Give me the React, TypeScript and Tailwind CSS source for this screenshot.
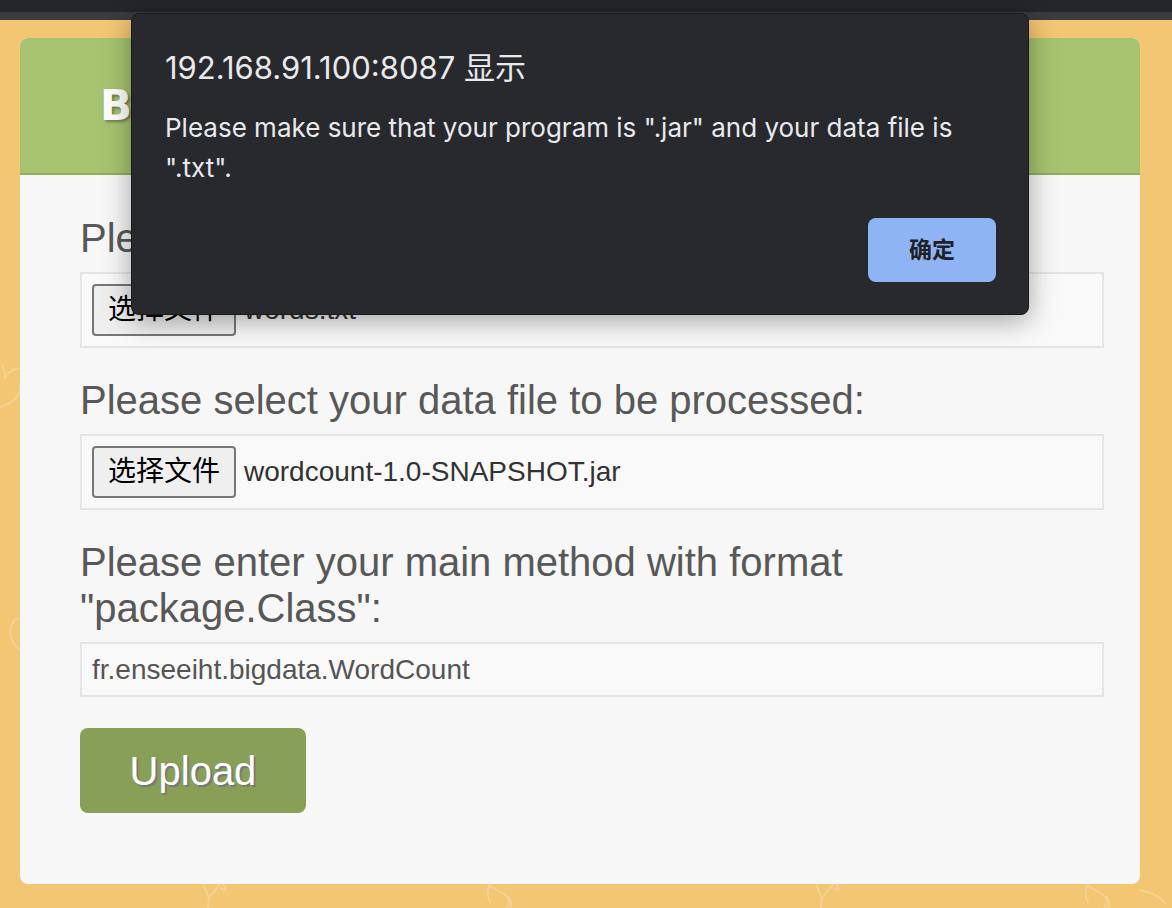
import React from "react"

const pageFont = { fontFamily: '"Liberation Sans", Arial, "Noto Sans CJK SC", sans-serif' }
const dialogFont = { fontFamily: 'Inter, "Noto Sans CJK SC", sans-serif' }

function Doodles() {
  // faint balloon / heart doodles in the page background
  const spots = [
    { x: 209, y: 884 },
    { x: 508, y: 884 },
    { x: 822, y: 884 },
    { x: 1106, y: 884 },
  ]
  return (
    <svg className="absolute inset-0 h-full w-full" viewBox="0 0 1172 908" fill="none">
      <g stroke="#ffffff" strokeOpacity="0.22" strokeWidth="2" strokeLinecap="round">
        <path d="M-10 410 C 10 405, 22 398, 20 385 M 2 365 C 6 375, 6 378, 4 378 C 12 368, 20 366, 24 372" />
        <path d="M20 618 C 8 620, 6 640, 20 650" />
        <path d="M1140 890 C 1150 892, 1160 896, 1166 904" />
        {spots.map((s, i) =>
          i % 2 === 0 ? (
            <path
              key={i}
              d={`M${s.x - 6} ${s.y} L${s.x} ${s.y + 14} L${s.x - 1} ${s.y + 24} M${s.x} ${s.y + 14} C ${s.x + 6} ${s.y + 6}, ${s.x + 10} ${s.y + 2}, ${s.x + 12} ${s.y - 2} C ${s.x + 20} ${s.y + 6}, ${s.x + 16} ${s.y + 8}, ${s.x + 12} ${s.y + 4}`}
            />
          ) : (
            <path
              key={i}
              d={`M${s.x - 18} ${s.y} C ${s.x - 22} ${s.y + 6}, ${s.x - 20} ${s.y + 14}, ${s.x - 18} ${s.y + 18} M${s.x - 18} ${s.y + 2} L${s.x - 4} ${s.y + 10} C ${s.x + 2} ${s.y + 14}, ${s.x + 2} ${s.y + 20}, ${s.x - 2} ${s.y + 24} M${s.x - 2} ${s.y + 12} C ${s.x + 4} ${s.y + 14}, ${s.x + 4} ${s.y + 20}, ${s.x + 2} ${s.y + 24}`}
            />
          )
        )}
      </g>
    </svg>
  )
}

function FileField({ name }: { name: string }) {
  return (
    <div className="flex h-[76px] items-center border-2 border-[#e4e4e4] bg-[#f9f9f9] px-[10px]">
      <button className="flex h-[52px] w-[144px] items-center justify-center rounded-[4px] border-2 border-[#767676] bg-[#efefef] text-[28px] text-black">
        选择文件
      </button>
      <span className="ml-2 text-[28px] text-[#333]">{name}</span>
    </div>
  )
}

export default function App() {
  return (
    <div className="relative h-[908px] overflow-hidden bg-[#f2c673]" style={pageFont}>
      <Doodles />

      {/* browser chrome strip */}
      <div className="relative h-3 bg-[#25262a]" />
      <div className="relative h-2 bg-[#3a3b3e]" />

      <main className="relative ml-5 mt-[18px] h-[846px] w-[1120px] overflow-hidden rounded-lg bg-[#f7f7f7]">
        <header className="flex h-[137px] items-center border-b-2 border-[#91ad5d] bg-[#a6c46f] pl-20">
          <h1
            className="text-[42px] font-bold text-white [text-shadow:2px_2px_3px_rgba(0,0,0,0.35)]"
            style={{ fontFamily: '"DejaVu Sans", sans-serif' }}
          >
            Big Data Platform
          </h1>
        </header>

        <form className="pl-[60px] pr-9 pt-10 text-[#585858]">
          <label className="mb-[11px] block text-[40px] leading-[46px]">Please select your program to be executed:</label>
          <FileField name="words.txt" />

          <label className="mb-[11px] mt-[29px] block text-[40px] leading-[46px]">
            Please select your data file to be processed:
          </label>
          <FileField name="wordcount-1.0-SNAPSHOT.jar" />

          <label className="mb-[11px] mt-[29px] block text-[40px] leading-[46px]">
            Please enter your main method with format
            <br />
            "package.Class":
          </label>
          <div className="flex h-[55px] items-center border-2 border-[#e4e4e4] bg-[#f9f9f9] pl-[10px] text-[28px] text-[#555]">
            fr.enseeiht.bigdata.WordCount
          </div>

          <button
            type="button"
            className="mt-[31px] h-[85px] w-[226px] rounded-lg bg-[#88a055] text-[40px] text-white [text-shadow:2px_2px_1px_#777]"
          >
            Upload
          </button>
        </form>
      </main>

      {/* alert dialog */}
      <div
        className="absolute left-[131px] top-[13px] flex h-[302px] w-[898px] flex-col rounded-lg border border-[#1a1a1c] bg-[#28292d] pl-[33px] pr-[32px] pt-[34px] pb-[32px] text-[#e8eaed] shadow-[0_6px_28px_rgba(0,0,0,0.35)]"
        style={dialogFont}
      >
        <div className="text-[31px] leading-[40px]">192.168.91.100:8087 显示</div>
        <p className="mt-[20px] text-[26px] leading-[40px]">
          Please make sure that your program is ".jar" and your data file is ".txt".
        </p>
        <div className="mt-auto flex justify-end">
          <button className="h-[64px] w-[128px] rounded-lg bg-[#8fb4f4] text-[23px] font-semibold text-[#202124]">
            确定
          </button>
        </div>
      </div>
    </div>
  )
}
